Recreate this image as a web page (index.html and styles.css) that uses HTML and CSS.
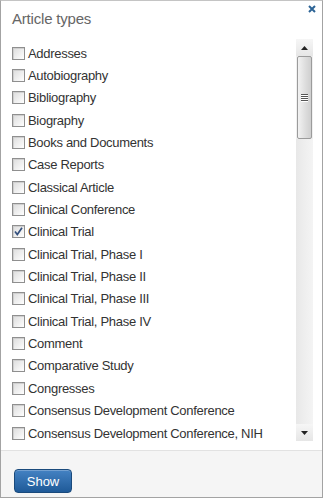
FILE: index.html
```html
<!DOCTYPE html>
<html>
<head>
<meta charset="utf-8">
<link rel="stylesheet" href="styles.css">
</head>
<body>
<div class="panel">
  <div class="header">
    <div class="title">Article types</div>
    <svg class="close" width="8" height="8" viewBox="0 0 8 8"><path d="M1 1L7 7M7 1L1 7" stroke="#2d6496" stroke-width="2"/></svg>
  </div>
  <div class="body">
    <div class="list">
      <div class="row"><span class="box"></span><span class="label">Addresses</span></div>
      <div class="row"><span class="box"></span><span class="label">Autobiography</span></div>
      <div class="row"><span class="box"></span><span class="label">Bibliography</span></div>
      <div class="row"><span class="box"></span><span class="label">Biography</span></div>
      <div class="row"><span class="box"></span><span class="label">Books and Documents</span></div>
      <div class="row"><span class="box"></span><span class="label">Case Reports</span></div>
      <div class="row"><span class="box"></span><span class="label">Classical Article</span></div>
      <div class="row"><span class="box"></span><span class="label">Clinical Conference</span></div>
      <div class="row"><span class="box checked"><svg width="11" height="11" viewBox="0 0 11 11"><path d="M2 5.5L4.3 8.5L9 1.8" fill="none" stroke="#34507e" stroke-width="1.7"/></svg></span><span class="label">Clinical Trial</span></div>
      <div class="row"><span class="box"></span><span class="label">Clinical Trial, Phase I</span></div>
      <div class="row"><span class="box"></span><span class="label">Clinical Trial, Phase II</span></div>
      <div class="row"><span class="box"></span><span class="label">Clinical Trial, Phase III</span></div>
      <div class="row"><span class="box"></span><span class="label">Clinical Trial, Phase IV</span></div>
      <div class="row"><span class="box"></span><span class="label">Comment</span></div>
      <div class="row"><span class="box"></span><span class="label">Comparative Study</span></div>
      <div class="row"><span class="box"></span><span class="label">Congresses</span></div>
      <div class="row"><span class="box"></span><span class="label">Consensus Development Conference</span></div>
      <div class="row"><span class="box"></span><span class="label">Consensus Development Conference, NIH</span></div>
    </div>
    <div class="scrollbar">
      <div class="sb-btn"><svg width="7" height="4" viewBox="0 0 7 4"><path d="M0 4L3.5 0L7 4Z" fill="#222"/></svg></div>
      <div class="thumb"><span class="grip"></span><span class="grip"></span><span class="grip"></span><span class="grip"></span></div>
      <div class="track"></div>
      <div class="sb-btn"><svg width="7" height="4" viewBox="0 0 7 4"><path d="M0 0L3.5 4L7 0Z" fill="#222"/></svg></div>
    </div>
  </div>
  <div class="footer">
    <button class="show">Show</button>
  </div>
</div>
</body>
</html>
```
FILE: styles.css
```css
html, body {
  margin: 0;
  padding: 0;
  background: #ffffff;
}
body {
  font-family: "Liberation Sans", Arial, sans-serif;
  width: 324px;
  height: 499px;
  overflow: hidden;
}
.panel {
  width: 323px;
  height: 498px;
  box-sizing: border-box;
  border: 1px solid #a3a3a3;
  border-top-color: #c4c4c4;
  display: flex;
  flex-direction: column;
  background: #fff;
}
.header {
  height: 38px;
  display: flex;
  justify-content: space-between;
  align-items: flex-start;
  padding: 9px 6px 0 11px;
  box-sizing: border-box;
}
.title {
  font-size: 15px;
  line-height: 18px;
  color: #666;
  letter-spacing: -0.2px;
}
.close {
  margin-top: -5px;
}
.body {
  height: 402px;
  display: flex;
}
.list {
  flex: 1;
  overflow: hidden;
  padding: 3px 0 0 11px;
}
.row {
  height: 22.35px;
  display: flex;
  align-items: center;
}
.box {
  width: 13px;
  height: 13px;
  box-sizing: border-box;
  border: 1px solid #8f8f8f;
  background: linear-gradient(135deg, #dcdcdc 0%, #f4f4f4 70%, #ffffff 100%);
  box-shadow: inset 1px 1px 0 #cfcfcf;
  margin-right: 3px;
  flex: none;
  display: flex;
  align-items: center;
  justify-content: center;
}
.box.checked svg {
  display: block;
}
.label {
  font-size: 13px;
  color: #333;
  white-space: nowrap;
  letter-spacing: -0.3px;
}
.scrollbar {
  width: 17px;
  margin-right: 9px;
  display: flex;
  flex-direction: column;
  background: #f0f0f0;
}
.sb-btn {
  height: 17px;
  display: flex;
  align-items: center;
  justify-content: center;
  background: linear-gradient(#f6f6f6, #e6e6e6);
  flex: none;
}
.thumb {
  height: 83px;
  margin: 0 1px;
  box-sizing: border-box;
  border: 1px solid #9b9b9b;
  border-radius: 2px;
  background: linear-gradient(90deg, #f2f2f2, #dcdcdc 60%, #cfcfcf);
  display: flex;
  flex-direction: column;
  align-items: center;
  justify-content: center;
  gap: 1px;
  flex: none;
}
.grip {
  width: 7px;
  height: 1px;
  background: #555;
  box-shadow: 0 1px 0 #fff;
}
.track {
  flex: 1;
  background: linear-gradient(90deg, #e8e8e8, #f4f4f4);
}
.footer {
  margin-top: 9px;
  flex: 1;
  border-top: 1px solid #e2e2e2;
  background: #f5f5f5;
  padding: 18px 0 0 13px;
}
.show {
  width: 58px;
  height: 24px;
  border: 1px solid #1a4a7c;
  border-radius: 4px;
  background: linear-gradient(#4482c3, #1f5a98);
  color: #fff;
  font-family: "Liberation Sans", Arial, sans-serif;
  font-size: 13px;
  padding: 0;
  box-shadow: inset 0 1px 0 rgba(255,255,255,0.25);
}
```
